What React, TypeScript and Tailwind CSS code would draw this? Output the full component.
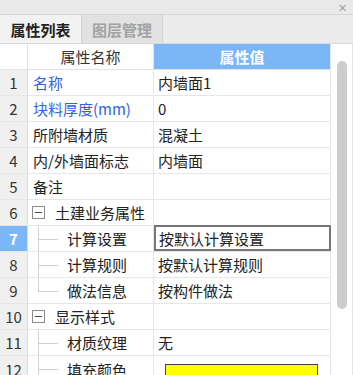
import React from "react";

type Row = {
  no: number;
  name: string;
  value?: string;
  blue?: boolean;
  group?: boolean;
  child?: "mid" | "last";
  selected?: boolean;
  color?: boolean;
};

const rows: Row[] = [
  { no: 1, name: "名称", value: "内墙面1", blue: true },
  { no: 2, name: "块料厚度(mm)", value: "0", blue: true },
  { no: 3, name: "所附墙材质", value: "混凝土" },
  { no: 4, name: "内/外墙面标志", value: "内墙面" },
  { no: 5, name: "备注" },
  { no: 6, name: "土建业务属性", group: true },
  { no: 7, name: "计算设置", value: "按默认计算设置", child: "mid", selected: true },
  { no: 8, name: "计算规则", value: "按默认计算规则", child: "mid" },
  { no: 9, name: "做法信息", value: "按构件做法", child: "last" },
  { no: 10, name: "显示样式", group: true },
  { no: 11, name: "材质纹理", value: "无", child: "mid" },
  { no: 12, name: "填充颜色", child: "mid", color: true },
];

function NameCell({ row }: { row: Row }) {
  if (row.group) {
    return (
      <div className="flex h-full items-center pl-[4px]">
        <div className="flex h-[13px] w-[13px] items-center justify-center border border-[#8c8c8c] bg-white">
          <div className="h-px w-[7px] bg-[#444]" />
        </div>
        <span className="ml-[10px] text-[#222]">{row.name}</span>
      </div>
    );
  }
  if (row.child) {
    return (
      <div className="relative flex h-full items-center pl-[39px]">
        {/* tree lines */}
        <div
          className={`absolute left-[10px] top-0 w-px bg-[#d0d0d0] ${
            row.child === "last" ? "h-1/2" : "h-full"
          }`}
        />
        <div className="absolute left-[10px] top-1/2 h-px w-[20px] bg-[#d0d0d0]" />
        <span className="text-[#222]">{row.name}</span>
      </div>
    );
  }
  return (
    <div className={`flex h-full items-center pl-[5px] ${row.blue ? "text-[#3162e6]" : "text-[#222]"}`}>
      {row.name}
    </div>
  );
}

export default function App() {
  return (
    <div
      className="h-[375px] w-[353px] overflow-hidden bg-white text-[15px] leading-none"
      style={{ fontFamily: '"Noto Sans CJK SC", "Noto Sans", sans-serif' }}
    >
      {/* Title strip */}
      <div className="flex h-[15px] items-center justify-end border-b border-[#d6d6d6] bg-[#e9e9e9] pr-[6px]">
        <span className="text-[11px] leading-[14px] text-[#a0a0a0]">✕</span>
      </div>

      {/* Tabs */}
      <div className="flex h-[29px] border-b border-[#d8d8d8] bg-[#ececec]">
        <div className="flex w-[82px] items-center justify-center border-r border-[#d4d4d4] bg-[#f2f2f2] font-bold text-[#222]">
          属性列表
        </div>
        <div className="flex w-[81px] items-center justify-center border-r border-[#d4d4d4] bg-[#e2e2e2] font-bold text-[#a2a2a2]">
          图层管理
        </div>
      </div>

      <div className="flex">
        {/* Table */}
        <div className="w-[331px]">
          <div className="grid h-[26px] grid-cols-[28px_126px_177px] border-b border-[#e2e2e2]">
            <div className="border-r border-[#e2e2e2] bg-white" />
            <div className="flex items-center justify-center border-r border-[#e2e2e2] text-[#333]">
              属性名称
            </div>
            <div className="flex items-center justify-center border-r border-[#e2e2e2] bg-[#7bb7f7] font-bold text-white">
              属性值
            </div>
          </div>
          {rows.map((row) => (
            <div
              key={row.no}
              className="grid h-[26px] grid-cols-[28px_126px_177px] border-b border-[#e6e6e6]"
            >
              <div
                className={`flex items-center justify-center border-r border-[#dcdcdc] ${
                  row.selected ? "bg-[#7bb7f7] font-bold text-white" : "bg-[#f0f0f0] text-[#333]"
                }`}
              >
                {row.no}
              </div>
              <div className="border-r border-[#e6e6e6]">
                <NameCell row={row} />
              </div>
              <div
                className={`flex items-center text-[#222] ${
                  row.selected
                    ? "-mt-px h-[26px] border-2 border-[#777] pl-[3px]"
                    : "border-r border-[#e6e6e6] pl-[4px]"
                }`}
              >
                {row.color ? (
                  <div className="mt-[8px] ml-[7px] h-[18px] w-[153px] self-start border border-[#444] bg-[#ffff00]" />
                ) : (
                  row.value
                )}
              </div>
            </div>
          ))}
        </div>

        {/* Scrollbar */}
        <div className="flex h-[331px] w-[22px] justify-center border-r border-[#e4e4e4] bg-white pl-[1px]">
          <div className="mt-[17px] h-[248px] w-[10px] rounded-full bg-[#cdcdcd]" />
        </div>
      </div>
    </div>
  );
}
